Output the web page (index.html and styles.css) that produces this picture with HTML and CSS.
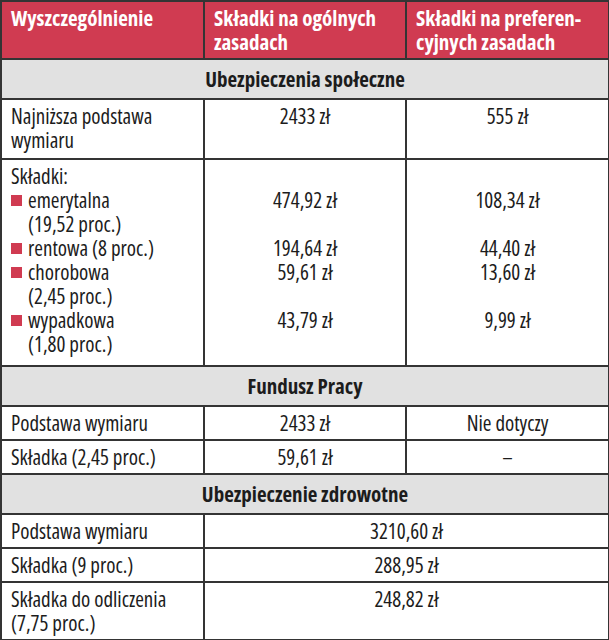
FILE: index.html
```html
<!DOCTYPE html>
<html lang="pl">
<head>
<meta charset="utf-8">
<title>Składki</title>
<link rel="stylesheet" href="styles.css">
</head>
<body>
<table class="tbl">
  <colgroup>
    <col class="c1">
    <col class="c2">
    <col class="c3">
  </colgroup>
  <thead>
    <tr class="head">
      <th>Wyszczególnienie</th>
      <th>Składki na ogólnych<br>zasadach</th>
      <th>Składki na preferen-<br>cyjnych zasadach</th>
    </tr>
  </thead>
  <tbody>
    <tr class="section"><td colspan="3">Ubezpieczenia społeczne</td></tr>
    <tr class="two">
      <td class="label">Najniższa podstawa<br>wymiaru</td>
      <td class="num">2433 zł</td>
      <td class="num">555 zł</td>
    </tr>
    <tr class="tall">
      <td class="label">
        <div>Składki:</div>
        <div class="bul">emerytalna<br>(19,52 proc.)</div>
        <div class="bul">rentowa (8 proc.)</div>
        <div class="bul">chorobowa<br>(2,45 proc.)</div>
        <div class="bul">wypadkowa<br>(1,80 proc.)</div>
      </td>
      <td class="num">&nbsp;<br>474,92 zł<br>&nbsp;<br>194,64 zł<br>59,61 zł<br>&nbsp;<br>43,79 zł</td>
      <td class="num">&nbsp;<br>108,34 zł<br>&nbsp;<br>44,40 zł<br>13,60 zł<br>&nbsp;<br>9,99 zł</td>
    </tr>
    <tr class="section"><td colspan="3">Fundusz Pracy</td></tr>
    <tr>
      <td class="label">Podstawa wymiaru</td>
      <td class="num">2433 zł</td>
      <td class="num">Nie dotyczy</td>
    </tr>
    <tr>
      <td class="label">Składka (2,45 proc.)</td>
      <td class="num">59,61 zł</td>
      <td class="num">–</td>
    </tr>
    <tr class="section"><td colspan="3">Ubezpieczenie zdrowotne</td></tr>
    <tr>
      <td class="label">Podstawa wymiaru</td>
      <td class="num" colspan="2">3210,60 zł</td>
    </tr>
    <tr>
      <td class="label">Składka (9 proc.)</td>
      <td class="num" colspan="2">288,95 zł</td>
    </tr>
    <tr>
      <td class="label">Składka do odliczenia<br>(7,75 proc.)</td>
      <td class="num" colspan="2">248,82 zł</td>
    </tr>
  </tbody>
</table>
</body>
</html>
```

FILE: styles.css
```css
html, body {
  margin: 0;
  padding: 0;
  background: #ffffff;
}

.tbl {
  border-collapse: collapse;
  table-layout: fixed;
  width: 608px;
  font-family: "Open Sans", "Roboto", "Liberation Sans", sans-serif;
  font-stretch: 75%;
  font-size: 21px;
  line-height: 24px;
  color: #1c1c1c;
}

.c1 { width: 203px; }
.c2 { width: 202px; }
.c3 { width: 203px; }

.tbl th,
.tbl td {
  border: 2px solid #343434;
  padding: 4px 9px;
  vertical-align: top;
}

.head th {
  background: #d03b51;
  color: #ffffff;
  font-weight: bold;
  text-align: left;
}

.section td {
  background: #e1e1e1;
  font-weight: bold;
  text-align: center;
  padding-top: 7px;
  padding-bottom: 7px;
}

.num {
  text-align: center;
}

.two td {
  padding-bottom: 6px;
}

.tall td {
  padding-bottom: 9px;
}

.bul {
  position: relative;
  padding-left: 17px;
}

.bul::before {
  content: "";
  position: absolute;
  left: 0;
  top: 7px;
  width: 11px;
  height: 11px;
  background: #d03b51;
}
```
